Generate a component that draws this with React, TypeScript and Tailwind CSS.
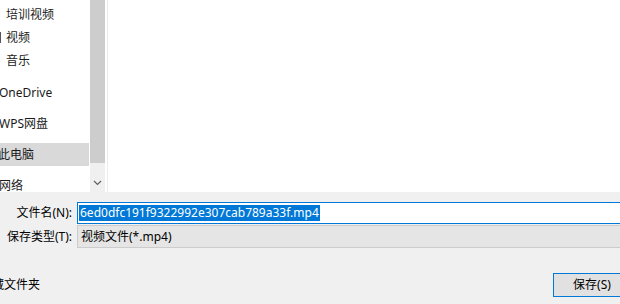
const navSub = ['培训视频', '视频', '音乐'];
const navTop = ['OneDrive', 'WPS网盘', '此电脑', '网络'];

function ChevronDown() {
  return (
    <svg width="9" height="6" viewBox="0 0 9 6" fill="none">
      <path d="M1 1l3.5 3.5L8 1" stroke="#606060" strokeWidth="1.2" />
    </svg>
  );
}

export default function App() {
  return (
    <div className="w-[620px] h-[304px] overflow-hidden bg-[#f0f0f0] flex flex-col text-[12px] leading-none font-['Noto_Sans','Noto_Sans_CJK_SC',sans-serif] text-[#1a1a1a]">
      {/* top: nav pane + file list */}
      <div className="h-[192px] flex shrink-0 bg-white overflow-hidden">
        <div className="w-[89px] shrink-0 flex flex-col pt-[3px] overflow-hidden">
          {navSub.map((label, i) => (
            <div key={label} className="h-[23px] shrink-0 flex items-center">
              {i === 1 ? (
                <span className="w-[1px] h-[11px] bg-[#555] mr-[5px]" />
              ) : (
                <span className="w-[6px]" />
              )}
              <span>{label}</span>
            </div>
          ))}
          {navTop.map((label, i) => (
            <div
              key={label}
              className={`h-[23px] flex items-center shrink-0 ${i === 0 ? 'mt-[9px]' : 'mt-[8px]'} ${
                label === '此电脑' ? 'bg-[#d9d9d9] -ml-[2px]' : '-ml-[1px]'
              }`}
            >
              <span>{label}</span>
            </div>
          ))}
        </div>
        <div className="w-[1px] shrink-0" />
        <div className="w-[15px] shrink-0 bg-[#f0f0f0] flex flex-col">
          <div className="h-[163px] bg-[#cdcdcd]" />
          <div className="flex-1 flex items-end justify-center pb-[6px]">
            <ChevronDown />
          </div>
        </div>
        <div className="w-[2px] shrink-0" />
        <div className="w-[1px] shrink-0 bg-[#ececec]" />
        <div className="flex-1" />
      </div>

      {/* bottom: file name / type / buttons */}
      <div className="flex-1 flex flex-col pt-[10px] text-black">
        <div className="flex items-center h-[22px]">
          <div className="w-[72px] shrink-0 text-right">文件名(N):</div>
          <div className="ml-[5px] w-[560px] shrink-0 h-[22px] bg-white border border-[#0078d7] flex items-center pl-[1px]">
            <span className="bg-[#0078d7] text-white h-[16px] flex items-center px-[1px]">
              6ed0dfc191f9322992e307cab789a33f.mp4
            </span>
          </div>
        </div>
        <div className="flex items-center h-[23px] mt-[1px]">
          <div className="w-[72px] shrink-0 text-right">保存类型(T):</div>
          <div className="ml-[5px] w-[560px] shrink-0 h-[23px] bg-[#e5e5e5] border border-[#cccccc] flex items-center pl-[3px]">
            视频文件(*.mp4)
          </div>
        </div>
        <div className="flex items-center mt-[25px] h-[24px]">
          <span className="-ml-[20px]">隐藏文件夹</span>
          <div className="flex-1" />
          <button className="w-[82px] h-[24px] -mr-[15px] bg-[#e1e1e1] border border-[#0078d7] flex items-center justify-center pr-[4px] text-black">
            保存(S)
          </button>
        </div>
      </div>
    </div>
  );
}
